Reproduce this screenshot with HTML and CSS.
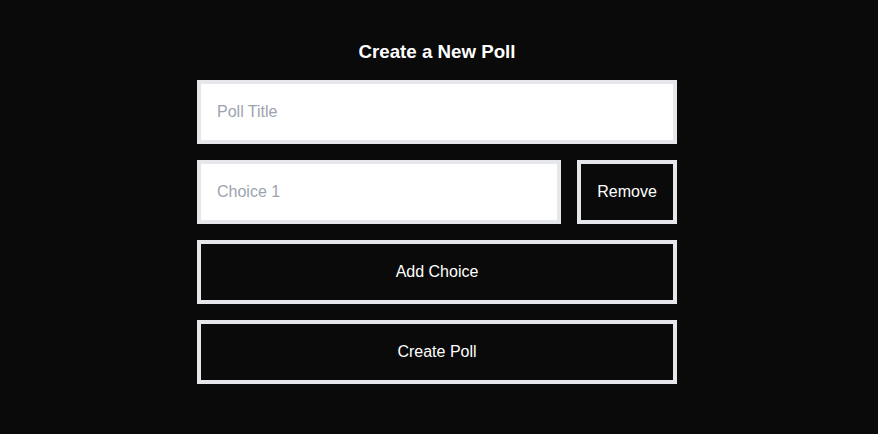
FILE: index.html
```html
<!DOCTYPE html>
<html>
<head>
<meta charset="utf-8">
<link rel="stylesheet" href="styles.css">
</head>
<body>
<div class="page">
  <div class="panel">
    <h3 class="title">Create a New Poll</h3>
    <form class="form">
      <input class="field" type="text" placeholder="Poll Title">
      <div class="choice-row">
        <input class="field choice" type="text" placeholder="Choice 1">
        <button type="button" class="btn btn-remove">Remove</button>
      </div>
      <button type="button" class="btn">Add Choice</button>
      <button type="submit" class="btn">Create Poll</button>
    </form>
  </div>
</div>
</body>
</html>
```

FILE: styles.css
```css
* { box-sizing: border-box; }
html, body {
  margin: 0;
  padding: 0;
  background: #0a0a0a;
  font-family: "Liberation Sans", Arial, sans-serif;
  color: #ffffff;
}
.page {
  display: flex;
  justify-content: center;
  padding: 41px 4px 0 0;
  min-height: 434px;
}
.panel {
  width: 480px;
}
.title {
  margin: 0 0 17px;
  font-size: 18.72px;
  line-height: 22px;
  font-weight: bold;
  text-align: center;
  color: #ffffff;
}
.form {
  display: flex;
  flex-direction: column;
  gap: 16px;
}
.field {
  display: block;
  width: 100%;
  height: 64px;
  padding: 16px;
  border: 4px solid #e5e7eb;
  border-radius: 0;
  background: #ffffff;
  font-family: inherit;
  font-size: 16px;
  line-height: 24px;
  color: #111827;
  outline: none;
}
.field::placeholder { color: #9ca3af; }
.choice-row {
  display: flex;
  gap: 16px;
}
.choice { flex: 1; width: auto; }
.btn {
  height: 64px;
  padding: 16px;
  border: 4px solid #e5e7eb;
  border-radius: 0;
  background: transparent;
  color: #ffffff;
  font-family: inherit;
  font-size: 16px;
  line-height: 24px;
  cursor: pointer;
}
.btn-remove { flex: none; width: 100px; }
```
